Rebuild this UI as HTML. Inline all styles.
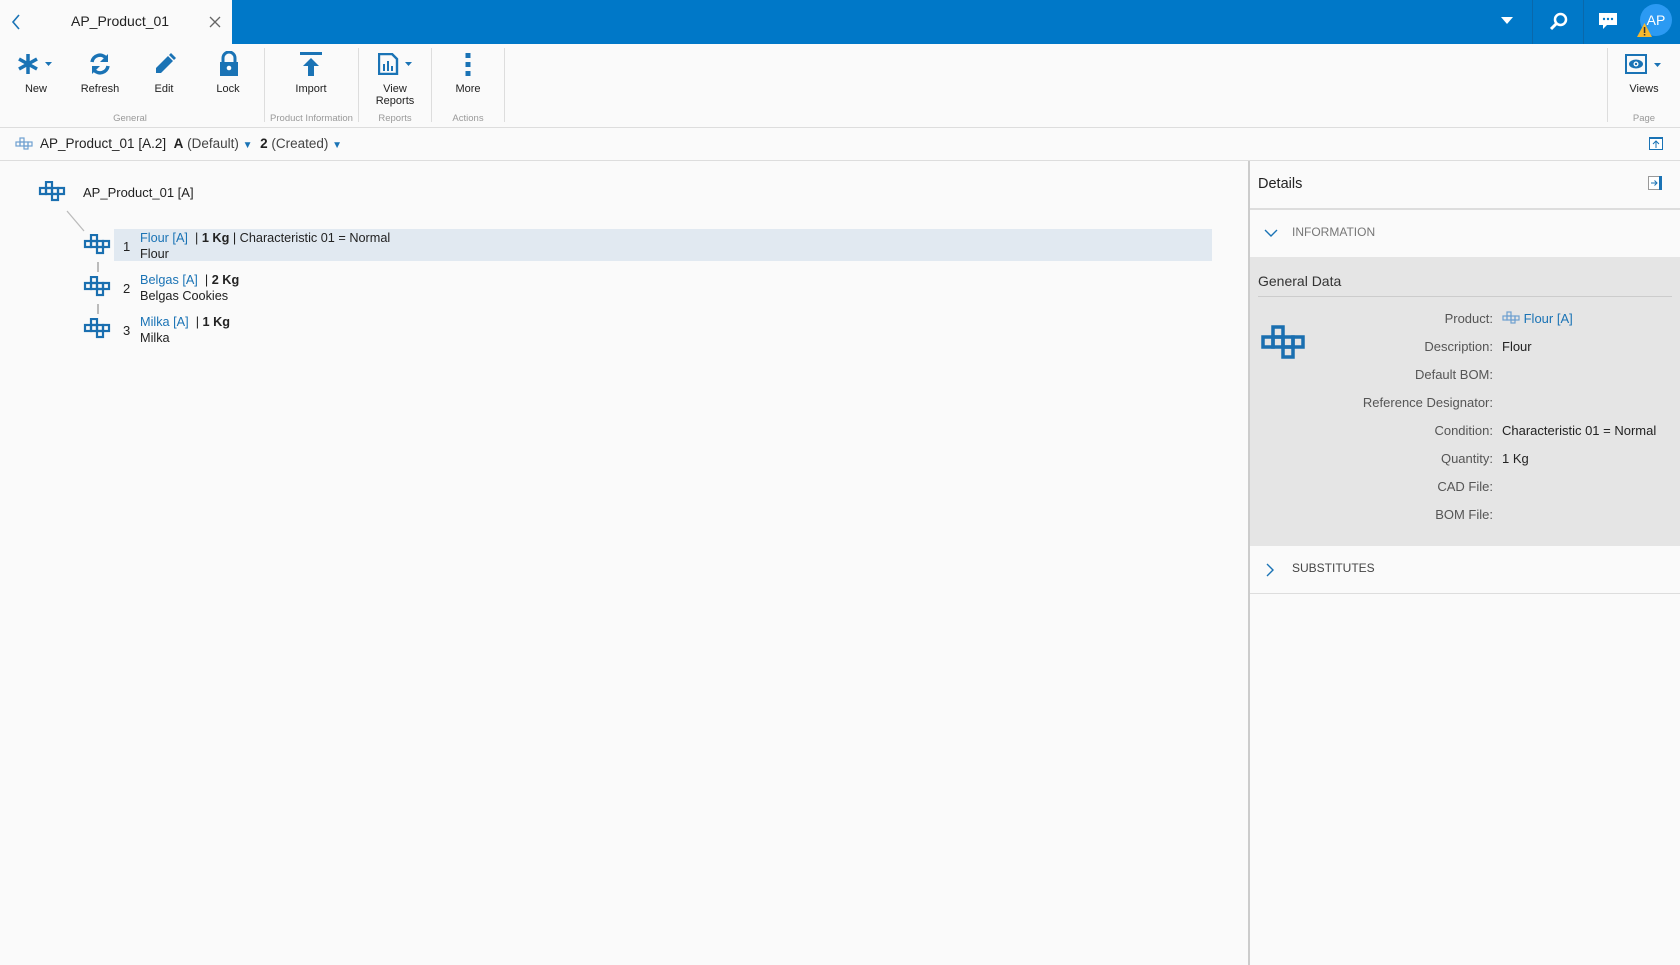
<!DOCTYPE html>
<html><head><meta charset="utf-8"><style>
*{box-sizing:border-box;margin:0;padding:0}
body{width:1680px;height:965px;background:#fafafa;font-family:"Liberation Sans",sans-serif;color:#222;position:relative;overflow:hidden}
.a{position:absolute}
.top{left:0;top:0;width:1680px;height:44px;background:#0078c8}
.tab{left:0;top:0;width:232px;height:44px;background:#fafafa}
.tb{font-size:11px;color:#222;text-align:center;width:70px}
.gl{font-size:9.5px;color:#999;text-align:center}
.sep{width:1px;background:#ddd;top:48px;height:74px}
.lbl{font-size:13px;color:#555;text-align:right;width:300px;left:1193px}
.val{font-size:13px;color:#222;left:1502px}
.blue{color:#1a73b5}
</style></head><body>
<div class="a top"></div>
<div class="a tab"></div>
<svg class="a" style="left:10px;top:13px" width="12" height="18"><path d="M9 2 L3 9 L9 16" stroke="#1a73b5" stroke-width="1.6" fill="none"/></svg>
<div class="a" style="left:71px;top:13px;font-size:14px">AP_Product_01</div>
<svg class="a" style="left:209px;top:16px" width="12" height="12"><path d="M1 1L11 11M11 1L1 11" stroke="#666" stroke-width="1.3"/></svg>
<svg class="a" style="left:1501px;top:17px" width="12" height="8"><path d="M0 0H12L6 7Z" fill="#fff"/></svg>
<div class="a" style="left:1532px;top:0;width:1px;height:44px;background:#0a68aa"></div>
<div class="a" style="left:1583px;top:0;width:1px;height:44px;background:#0a68aa"></div>
<svg class="a" style="left:1549px;top:12px" width="20" height="20"><circle cx="11.5" cy="7.5" r="5.5" stroke="#fff" stroke-width="2.5" fill="none"/><path d="M7.5 11.5L2 17" stroke="#fff" stroke-width="3"/></svg>
<svg class="a" style="left:1599px;top:13px" width="18" height="17"><path d="M0 0H18V12H8L4 16V12H0Z" fill="#fff"/><circle cx="5" cy="6" r="1.2" fill="#0078c8"/><circle cx="9" cy="6" r="1.2" fill="#0078c8"/><circle cx="13" cy="6" r="1.2" fill="#0078c8"/></svg>
<div class="a" style="left:1640px;top:4px;width:32px;height:32px;border-radius:50%;background:#2b9af3;color:#fff;font-size:14px;text-align:center;line-height:32px">AP</div>
<svg class="a" style="left:1637px;top:23px" width="15" height="14"><path d="M7.5 0L15 14H0Z" fill="#f5b82e"/><rect x="6.8" y="4" width="1.5" height="6" fill="#333"/><rect x="6.8" y="11" width="1.5" height="1.5" fill="#333"/></svg>

<!-- toolbar -->
<svg class="a" style="left:16px;top:52px" width="40" height="24"><g stroke="#1a73b5" stroke-width="3.5"><path d="M12 2V22M3 7L21 17M21 7L3 17"/></g><path d="M29 10H36L32.5 14Z" fill="#1a73b5"/></svg>
<div class="a tb" style="left:1px;top:83px">New</div>
<svg class="a" style="left:88px;top:52px" width="24" height="24"><path d="M4 10A8 8 0 0 1 18 6" stroke="#1a73b5" stroke-width="3.5" fill="none"/><path d="M20 2V10H12Z" fill="#1a73b5"/><path d="M20 14A8 8 0 0 1 6 18" stroke="#1a73b5" stroke-width="3.5" fill="none"/><path d="M4 22V14H12Z" fill="#1a73b5"/></svg>
<div class="a tb" style="left:65px;top:83px">Refresh</div>
<svg class="a" style="left:152px;top:52px" width="24" height="24"><path d="M4 16L16 4L21 9L9 21H4Z" fill="#1a73b5"/><path d="M17 3L19 1L24 6L22 8Z" fill="#1a73b5"/></svg>
<div class="a tb" style="left:129px;top:83px">Edit</div>
<svg class="a" style="left:219px;top:51px" width="20" height="26"><path d="M4 11V7A6 6 0 0 1 16 7V11" stroke="#1a73b5" stroke-width="3" fill="none"/><rect x="1" y="11" width="18" height="14" fill="#1a73b5"/><circle cx="10" cy="17" r="2.3" fill="#fff"/></svg>
<div class="a tb" style="left:193px;top:83px">Lock</div>
<div class="a sep" style="left:264px"></div>
<svg class="a" style="left:300px;top:52px" width="22" height="24"><rect x="0" y="0" width="22" height="3" fill="#1a73b5"/><path d="M11 6L3 14H8V24H14V14H19Z" fill="#1a73b5"/></svg>
<div class="a tb" style="left:276px;top:83px">Import</div>
<div class="a sep" style="left:358px"></div>
<svg class="a" style="left:378px;top:53px" width="36" height="22"><path d="M1 1H14L19 6V21H1Z" stroke="#1a73b5" stroke-width="2.4" fill="none"/><rect x="5" y="11" width="2" height="7" fill="#1a73b5"/><rect x="9" y="8" width="2" height="10" fill="#1a73b5"/><rect x="13" y="13" width="2" height="5" fill="#1a73b5"/><path d="M27 9H34L30.5 13Z" fill="#1a73b5"/></svg>
<div class="a tb" style="left:360px;top:83px;line-height:12px">View<br>Reports</div>
<div class="a sep" style="left:431px"></div>
<svg class="a" style="left:464px;top:52px" width="8" height="24"><rect x="1.5" y="1" width="5" height="5" fill="#1a73b5"/><rect x="1.5" y="10" width="5" height="5" fill="#1a73b5"/><rect x="1.5" y="19" width="5" height="5" fill="#1a73b5"/></svg>
<div class="a tb" style="left:433px;top:83px">More</div>
<div class="a sep" style="left:504px"></div>
<div class="a gl" style="left:90px;top:113px;width:80px">General</div>
<div class="a gl" style="left:265px;top:113px;width:93px">Product Information</div>
<div class="a gl" style="left:360px;top:113px;width:70px">Reports</div>
<div class="a gl" style="left:433px;top:113px;width:70px">Actions</div>
<div class="a sep" style="left:1607px"></div>
<svg class="a" style="left:1625px;top:54px" width="40" height="20"><rect x="1" y="1" width="20" height="18" stroke="#1a73b5" stroke-width="2" fill="none"/><ellipse cx="11" cy="10" rx="7" ry="4.5" fill="#1a73b5"/><circle cx="11" cy="10" r="2.5" fill="#fff"/><circle cx="11" cy="10" r="1.2" fill="#1a73b5"/><path d="M29 9H36L32.5 13Z" fill="#1a73b5"/></svg>
<div class="a tb" style="left:1609px;top:83px">Views</div>
<div class="a gl" style="left:1609px;top:113px;width:70px">Page</div>
<div class="a" style="left:0;top:127px;width:1680px;height:1px;background:#ddd"></div>

<!-- breadcrumb -->
<svg class="a" style="left:15px;top:137px" width="18" height="13"><g fill="none" stroke="#6fa0d0" stroke-width="1.2"><rect x="5" y="1" width="4" height="4"/><rect x="1" y="5" width="4" height="4"/><rect x="5" y="5" width="4" height="4"/><rect x="9" y="5" width="4" height="4"/><rect x="13" y="5" width="4" height="4"/><rect x="9" y="9" width="4" height="3"/></g></svg>
<div class="a" style="left:40px;top:136px;font-size:13.5px;white-space:nowrap">AP_Product_01 [A.2] &nbsp;<b>A</b> <span style="color:#444">(Default)</span> <span class="blue" style="font-size:10px">▼</span> &nbsp;<b>2</b> <span style="color:#444">(Created)</span> <span class="blue" style="font-size:10px">▼</span></div>
<svg class="a" style="left:1649px;top:137px" width="14" height="13"><rect x="0.5" y="0.5" width="13" height="12" fill="#fff" stroke="#1a73b5"/><rect x="0" y="0" width="14" height="2" fill="#1a73b5"/><path d="M7 4V11M4 7L7 4L10 7" stroke="#1a73b5" fill="none"/></svg>
<div class="a" style="left:0;top:160px;width:1680px;height:1px;background:#ddd"></div>

<!-- tree -->
<svg width="0" height="0" style="position:absolute"><defs><g id="pi" fill="none" stroke="#1a6fb0" stroke-width="2.2"><rect x="8" y="1" width="6" height="6"/><rect x="2" y="7" width="6" height="6"/><rect x="8" y="7" width="6" height="6"/><rect x="14" y="7" width="6" height="6"/><rect x="20" y="7" width="6" height="6"/><rect x="14" y="13" width="6" height="6"/></g></defs></svg>
<svg class="a" style="left:38px;top:181px" width="28" height="21"><use href="#pi"/></svg>
<div class="a" style="left:83px;top:185px;font-size:13px">AP_Product_01 [A]</div>
<svg class="a" style="left:66px;top:210px" width="20" height="22"><path d="M1 1L18 21" stroke="#bbb" stroke-width="1.3"/></svg>
<div class="a" style="left:114px;top:229px;width:1098px;height:32px;background:#e1e9f1"></div>
<div class="a" style="left:97px;top:262px;width:2px;height:10px;background:#bbb"></div>
<div class="a" style="left:97px;top:304px;width:2px;height:10px;background:#bbb"></div>
<svg class="a" style="left:83px;top:234px" width="28" height="21"><use href="#pi"/></svg>
<svg class="a" style="left:83px;top:276px" width="28" height="21"><use href="#pi"/></svg>
<svg class="a" style="left:83px;top:318px" width="28" height="21"><use href="#pi"/></svg>
<div class="a" style="left:123px;top:239px;font-size:13px">1</div>
<div class="a" style="left:123px;top:281px;font-size:13px">2</div>
<div class="a" style="left:123px;top:323px;font-size:13px">3</div>
<div class="a" style="left:140px;top:230px;font-size:12.7px;line-height:16px;white-space:nowrap"><span class="blue">Flour [A]</span> &nbsp;| <b>1 Kg</b> | Characteristic 01 = Normal<br>Flour</div>
<div class="a" style="left:140px;top:272px;font-size:12.7px;line-height:16px;white-space:nowrap"><span class="blue">Belgas [A]</span> &nbsp;| <b>2 Kg</b><br>Belgas Cookies</div>
<div class="a" style="left:140px;top:314px;font-size:12.7px;line-height:16px;white-space:nowrap"><span class="blue">Milka [A]</span> &nbsp;| <b>1 Kg</b><br>Milka</div>

<!-- details -->
<div class="a" style="left:1248px;top:161px;width:2px;height:804px;background:#ccc"></div>
<div class="a" style="left:1258px;top:176px;font-size:14.5px">Details</div>
<svg class="a" style="left:1648px;top:176px" width="14" height="14"><rect x="0.5" y="0.5" width="13" height="13" fill="#fff" stroke="#999"/><rect x="11" y="0" width="3" height="14" fill="#1a73b5"/><path d="M3 7H9M6.5 4.5L9 7L6.5 9.5" stroke="#1a73b5" fill="none"/></svg>
<div class="a" style="left:1250px;top:208px;width:430px;height:2px;background:#ddd"></div>
<svg class="a" style="left:1264px;top:229px" width="14" height="9"><path d="M1 1L7 7L13 1" stroke="#1a73b5" stroke-width="1.4" fill="none"/></svg>
<div class="a" style="left:1292px;top:225px;font-size:12px;color:#777">INFORMATION</div>
<div class="a" style="left:1250px;top:257px;width:430px;height:289px;background:#e5e5e5"></div>
<div class="a" style="left:1258px;top:273px;font-size:14px;color:#333">General Data</div>
<div class="a" style="left:1258px;top:296px;width:414px;height:1px;background:#ccc"></div>
<svg class="a" style="left:1261px;top:325px" width="46" height="36"><g fill="none" stroke="#1a6fb0" stroke-width="3.5"><rect x="12" y="2" width="10" height="10"/><rect x="2" y="12" width="10" height="10"/><rect x="12" y="12" width="10" height="10"/><rect x="22" y="12" width="10" height="10"/><rect x="32" y="12" width="10" height="10"/><rect x="22" y="22" width="10" height="10"/></g></svg>
<div class="a lbl" style="top:311px">Product:</div>
<div class="a val blue" style="top:311px"><svg width="18" height="13" style="vertical-align:-1px"><g fill="none" stroke="#6fa0d0" stroke-width="1.2"><rect x="5" y="1" width="4" height="4"/><rect x="1" y="5" width="4" height="4"/><rect x="5" y="5" width="4" height="4"/><rect x="9" y="5" width="4" height="4"/><rect x="13" y="5" width="4" height="4"/><rect x="9" y="9" width="4" height="3"/></g></svg> Flour [A]</div>
<div class="a lbl" style="top:339px">Description:</div><div class="a val" style="top:339px">Flour</div>
<div class="a lbl" style="top:367px">Default BOM:</div>
<div class="a lbl" style="top:395px">Reference Designator:</div>
<div class="a lbl" style="top:423px">Condition:</div><div class="a val" style="top:423px">Characteristic 01 = Normal</div>
<div class="a lbl" style="top:451px">Quantity:</div><div class="a val" style="top:451px">1 Kg</div>
<div class="a lbl" style="top:479px">CAD File:</div>
<div class="a lbl" style="top:507px">BOM File:</div>
<svg class="a" style="left:1266px;top:563px" width="9" height="14"><path d="M1 1L7 7L1 13" stroke="#1a73b5" stroke-width="1.4" fill="none"/></svg>
<div class="a" style="left:1292px;top:561px;font-size:12px;color:#444">SUBSTITUTES</div>
<div class="a" style="left:1250px;top:593px;width:430px;height:1px;background:#ddd"></div>
</body></html>
